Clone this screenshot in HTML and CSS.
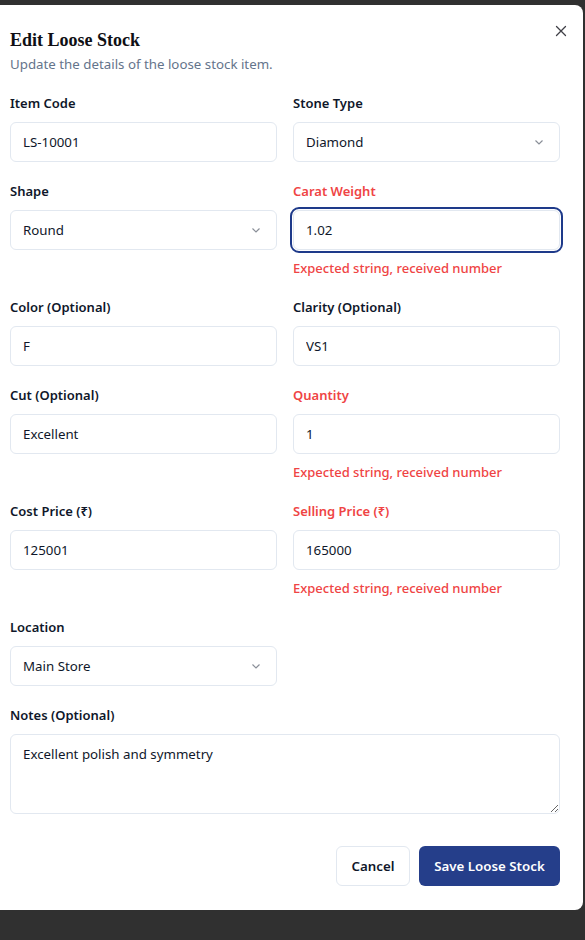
FILE: index.html
```html
<!DOCTYPE html>
<html lang="en">
<head>
<meta charset="utf-8">
<title>Edit Loose Stock</title>
<link rel="stylesheet" href="styles.css">
</head>
<body>
<div class="modal">
  <button class="close" aria-label="Close">
    <svg width="12" height="12" viewBox="0 0 12 12"><path d="M1.5 1.5 L10.5 10.5 M10.5 1.5 L1.5 10.5" stroke="#3f3f46" stroke-width="1.3" stroke-linecap="round"/></svg>
  </button>
  <div class="header">
    <h2 class="title">Edit Loose Stock</h2>
    <p class="subtitle">Update the details of the loose stock item.</p>
  </div>
  <form class="form">
    <div class="field">
      <label class="label">Item Code</label>
      <input class="input" value="LS-10001">
    </div>
    <div class="field">
      <label class="label">Stone Type</label>
      <div class="select"><span>Diamond</span><svg class="chev" width="12" height="12" viewBox="0 0 12 12"><path d="M2.5 4.5 L6 8 L9.5 4.5" fill="none" stroke="#8a8f98" stroke-width="1.2"/></svg></div>
    </div>
    <div class="field">
      <label class="label">Shape</label>
      <div class="select"><span>Round</span><svg class="chev" width="12" height="12" viewBox="0 0 12 12"><path d="M2.5 4.5 L6 8 L9.5 4.5" fill="none" stroke="#8a8f98" stroke-width="1.2"/></svg></div>
    </div>
    <div class="field">
      <label class="label error-label">Carat Weight</label>
      <input class="input is-focused" value="1.02">
      <p class="error">Expected string, received number</p>
    </div>
    <div class="field">
      <label class="label">Color (Optional)</label>
      <input class="input" value="F">
    </div>
    <div class="field">
      <label class="label">Clarity (Optional)</label>
      <input class="input" value="VS1">
    </div>
    <div class="field">
      <label class="label">Cut (Optional)</label>
      <input class="input" value="Excellent">
    </div>
    <div class="field">
      <label class="label error-label">Quantity</label>
      <input class="input" value="1">
      <p class="error">Expected string, received number</p>
    </div>
    <div class="field">
      <label class="label">Cost Price (₹)</label>
      <input class="input" value="125001">
    </div>
    <div class="field">
      <label class="label error-label">Selling Price (₹)</label>
      <input class="input" value="165000">
      <p class="error">Expected string, received number</p>
    </div>
    <div class="field">
      <label class="label">Location</label>
      <div class="select"><span>Main Store</span><svg class="chev" width="12" height="12" viewBox="0 0 12 12"><path d="M2.5 4.5 L6 8 L9.5 4.5" fill="none" stroke="#8a8f98" stroke-width="1.2"/></svg></div>
    </div>
    <div class="field"></div>
    <div class="field span2">
      <label class="label">Notes (Optional)</label>
      <textarea class="textarea">Excellent polish and symmetry</textarea>
    </div>
  </form>
  <div class="footer">
    <button class="btn btn-outline" type="button">Cancel</button>
    <button class="btn btn-primary" type="button">Save Loose Stock</button>
  </div>
</div>
</body>
</html>
```
FILE: styles.css
```css
* { box-sizing: border-box; }
html, body { margin: 0; padding: 0; }
body {
  background: #303030;
  font-family: "Noto Sans", "Open Sans", sans-serif;
  color: #0f172a;
  height: 940px;
  overflow: hidden;
  padding-top: 5px;
}
.modal {
  position: relative;
  width: 583px;
  height: 905px;
  background: #fff;
  border-radius: 0 8px 8px 0;
  padding: 23px 23px 25px 10px;
  display: flex;
  flex-direction: column;
}
.close {
  position: absolute;
  top: 19px;
  right: 15px;
  width: 14px;
  height: 14px;
  padding: 0;
  border: 0;
  background: transparent;
  display: flex;
  align-items: center;
  justify-content: center;
}
.header { display: flex; flex-direction: column; gap: 2px; margin-bottom: 19px; }
.title {
  margin: 0;
  font-family: "Liberation Serif", serif;
  font-weight: 700;
  font-size: 18px;
  line-height: 24px;
  color: #0f0f14;
}
.subtitle {
  margin: 0;
  font-size: 13.3px;
  line-height: 20px;
  color: #64748b;
}
.form {
  display: grid;
  grid-template-columns: 1fr 1fr;
  column-gap: 16px;
  row-gap: 19px;
}
.span2 { grid-column: 1 / span 2; }
.field { display: flex; flex-direction: column; gap: 8px; }
.label {
  font-size: 13px;
  font-weight: 600;
  line-height: 21px;
  color: #0f172a;
}
.error-label { color: #ef4444; }
.input, .select, .textarea {
  height: 40px;
  width: 100%;
  border: 1px solid #e2e8f0;
  border-radius: 6px;
  background: #fff;
  padding: 0 12px;
  font-family: inherit;
  font-size: 13.3px;
  color: #0f172a;
  outline: none;
}
.select {
  display: flex;
  align-items: center;
  justify-content: space-between;
  padding-right: 14px;
}
.chev { flex: none; }
.is-focused {
  outline: 2px solid #1e3a8a;
  outline-offset: 1px;
}
.textarea {
  height: 80px;
  padding: 9px 12px;
  line-height: 20px;
  resize: vertical;
}
.error {
  margin: 0;
  font-size: 13px;
  font-weight: 500;
  line-height: 20px;
  color: #ef4444;
}
.footer {
  margin-top: 32px;
  display: flex;
  justify-content: flex-end;
  gap: 9px;
}
.btn {
  height: 40px;
  border-radius: 6px;
  font-family: inherit;
  font-size: 13.3px;
  font-weight: 600;
  padding: 0;
  white-space: nowrap;
}
.btn-outline {
  width: 74px;
  background: #fff;
  border: 1px solid #e2e8f0;
  color: #0f172a;
}
.btn-primary {
  width: 141px;
  background: #253e8a;
  border: 0;
  color: #fff;
}
```
